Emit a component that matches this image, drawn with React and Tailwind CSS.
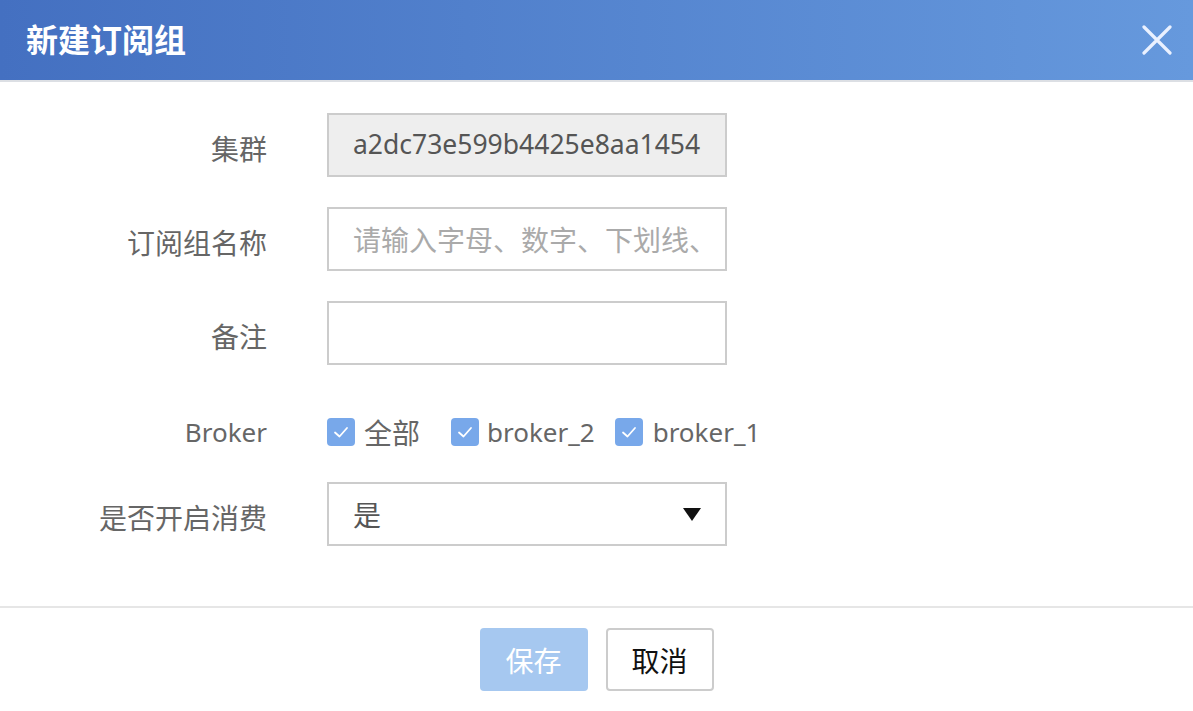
import React from "react";

const Check = () => (
  <span className="w-[28px] h-[28px] rounded-[4px] bg-[#78a8ea] flex items-center justify-center shrink-0">
    <svg width="20" height="20" viewBox="0 0 20 20" fill="none">
      <path d="M4 10.5 L8.5 14.5 L16 6" stroke="white" strokeWidth="1.8" strokeLinecap="round" strokeLinejoin="round" />
    </svg>
  </span>
);

export default function App() {
  return (
    <div className="w-[1193px] h-[711px] bg-white flex flex-col font-['Noto_Sans_CJK_SC',sans-serif] overflow-hidden">
      <div className="h-[82px] shrink-0 bg-gradient-to-r from-[#4470c1] to-[#6699dd] border-b-2 border-[#dcdfe4] flex items-center justify-between pl-[26px] pr-[20px]">
        <span className="text-white text-[32px] font-bold leading-none pb-[4px]">新建订阅组</span>
        <svg width="30" height="30" viewBox="0 0 30 30" className="mr-[1px]">
          <path d="M2 2 L28 28 M28 2 L2 28" stroke="#eaf1ff" strokeWidth="3.2" strokeLinecap="round" />
        </svg>
      </div>

      <div className="flex flex-col pt-[31px] gap-[30px] text-[28px]">
        <div className="flex items-center h-[64px]">
          <div className="w-[267px] text-right text-[#666] pt-[6px] whitespace-nowrap">集群</div>
          <div className="ml-[60px] w-[400px] h-[64px] bg-[#eeeeee] border-2 border-[#cccccc] flex items-center pl-[24px] text-[#555] font-['Noto_Sans',sans-serif] text-[26.5px]">
            a2dc73e599b4425e8aa1454
          </div>
        </div>
        <div className="flex items-center h-[64px]">
          <div className="w-[267px] text-right text-[#666] pt-[6px] whitespace-nowrap">订阅组名称</div>
          <div className="ml-[60px] w-[400px] h-[64px] bg-white border-2 border-[#cccccc] flex items-center pl-[24px] text-[#aaaaaa] whitespace-nowrap overflow-hidden">
            请输入字母、数字、下划线、
          </div>
        </div>
        <div className="flex items-center h-[64px]">
          <div className="w-[267px] text-right text-[#666] pt-[6px] whitespace-nowrap">备注</div>
          <div className="ml-[60px] w-[400px] h-[64px] bg-white border-2 border-[#cccccc]" />
        </div>
      </div>

      <div className="flex items-center h-[40px] mt-[47px] text-[28px]">
        <div className="w-[267px] text-right text-[#666] font-['Noto_Sans',sans-serif] text-[26px] whitespace-nowrap">Broker</div>
        <div className="ml-[60px] flex items-center text-[#666] whitespace-nowrap">
          <Check />
          <span className="ml-[9px] mr-[31px]">全部</span>
          <Check />
          <span className="ml-[8px] mr-[20px] font-['Noto_Sans',sans-serif] text-[26px]">broker_2</span>
          <Check />
          <span className="ml-[10px] font-['Noto_Sans',sans-serif] text-[26px]">broker_1</span>
        </div>
      </div>

      <div className="flex items-center h-[64px] mt-[30px] text-[28px]">
        <div className="w-[267px] text-right text-[#666] pt-[6px] whitespace-nowrap">是否开启消费</div>
        <div className="ml-[60px] w-[400px] h-[64px] bg-white border-2 border-[#cccccc] flex items-center justify-between pl-[24px] pr-[24px] text-[#555]">
          <span>是</span>
          <svg width="18" height="13" viewBox="0 0 18 13">
            <path d="M0 0 L18 0 L9 13 Z" fill="#111" />
          </svg>
        </div>
      </div>

      <div className="mt-[60px] border-t-2 border-[#e6e6e6] flex justify-center gap-[18px] pt-[20px]">
        <button className="w-[108px] h-[63px] rounded-[4px] bg-[#a6c8f0] text-white text-[28px]">保存</button>
        <button className="w-[108px] h-[63px] rounded-[4px] bg-white border-2 border-[#cccccc] text-[#111] text-[28px]">取消</button>
      </div>
    </div>
  );
}
